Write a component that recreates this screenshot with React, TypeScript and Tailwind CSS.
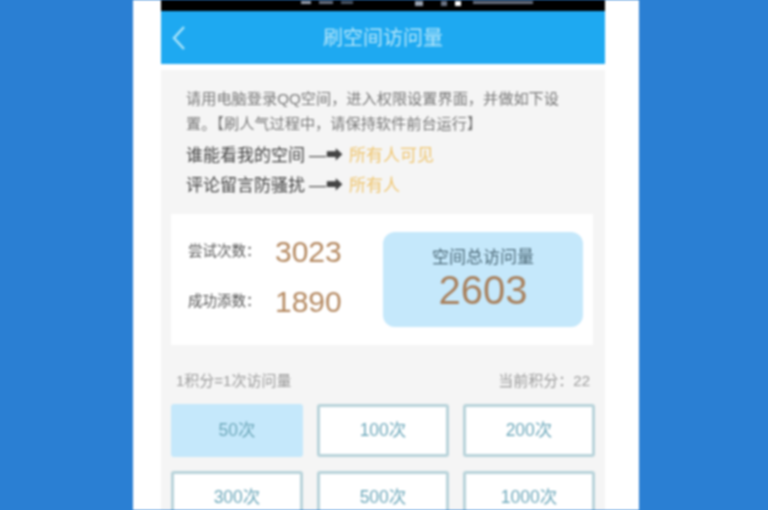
const cjk = '"Liberation Sans", "Noto Sans CJK SC", sans-serif';

const options = ['50次', '100次', '200次', '300次', '500次', '1000次'];

function Stat({ label, value }: { label: string; value: string }) {
  return (
    <div className="flex items-center h-[50px]">
      <span className="text-[14.5px] text-[#555] w-[87px]">{label}</span>
      <span className="text-[30px] text-[#b58a62]">{value}</span>
    </div>
  );
}

export default function App() {
  return (
    <div className="h-[510px] w-[768px] overflow-hidden bg-[#2a7fd3]" style={{ fontFamily: cjk }}>
      <div className="ml-[133px] w-[506px] h-[510px] bg-white pl-[28px] pr-[34px] blur-[1px]">
        <div className="h-[11px] bg-black flex items-start pt-[1px] pl-[140px] overflow-hidden">
          <span className="w-[10px] h-[3px] bg-gray-400"></span>
          <span className="ml-[8px] w-[14px] h-[3px] bg-gray-500"></span>
          <span className="ml-[8px] w-[12px] h-[3px] bg-gray-600"></span>
          <span className="ml-[62px] w-[8px] h-[5px] bg-gray-400"></span>
          <span className="ml-[18px] w-[6px] h-[5px] bg-gray-500"></span>
          <span className="ml-[8px] w-[6px] h-[5px] bg-white"></span>
          <span className="ml-[12px] w-[60px] h-[3px] bg-gray-500"></span>
        </div>
        <div className="relative h-[53px] bg-[#1ea9f1] flex items-center justify-center">
          <svg className="absolute left-[10px] top-[14px]" width="16" height="26" viewBox="0 0 16 26" fill="none">
            <path d="M13 2 L3 13 L13 24" stroke="#a6e3fa" strokeWidth="2.5" />
          </svg>
          <span className="text-[20px] text-[#b5e6fa]">刷空间访问量</span>
        </div>
        <div className="mt-[6px] h-[440px] bg-[#f5f5f5] overflow-hidden">
          <div className="pl-[25px] pr-[35px] pt-[16px]">
            <p className="text-[15.2px] leading-[25px] text-[#777]">
              请用电脑登录QQ空间&#xFF0C;进入权限设置界面&#xFF0C;并做如下设置。【刷人气过程中&#xFF0C;请保持软件前台运行】
            </p>
            <div className="mt-[5px] flex items-center h-[30px] text-[17px] text-[#444]">
              <span>谁能看我的空间</span>
              <span className="ml-[4px] text-[#444]">—➡</span>
              <span className="ml-[6px] text-[#efc56e]">所有人可见</span>
            </div>
            <div className="flex items-center h-[30px] text-[17px] text-[#444]">
              <span>评论留言防骚扰</span>
              <span className="ml-[4px] text-[#444]">—➡</span>
              <span className="ml-[6px] text-[#efc56e]">所有人</span>
            </div>
          </div>
          <div className="mt-[13px] ml-[10px] mr-[12px] h-[131px] bg-white flex items-center justify-between pl-[17px] pr-[10px]">
            <div className="-mt-[6px]">
              <Stat label="尝试次数&#xFF1A;" value="3023" />
              <Stat label="成功添数&#xFF1A;" value="1890" />
            </div>
            <div className="w-[200px] h-[95px] rounded-[12px] bg-[#c5e8fb] flex flex-col items-center pt-[15px]">
              <span className="text-[17px] leading-[22px] text-[#4d6a78]">空间总访问量</span>
              <span className="text-[40px] leading-[42px] text-[#a9825f]">2603</span>
            </div>
          </div>
          <div className="mt-[25px] mx-[15px] flex justify-between text-[15px] text-[#999]">
            <span>1积分=1次访问量</span>
            <span>当前积分&#xFF1A;22</span>
          </div>
          <div className="mt-[11px] mx-[10px] grid grid-cols-3 gap-x-[14px] gap-y-[14px]">
            {options.map((o, i) => (
              <div
                key={o}
                className={`h-[53px] pt-[1px] flex items-center justify-center text-[17.5px] text-[#6fa9bb] rounded-[3px] border-[3px] ${
                  i === 0 ? 'bg-[#c5e8fb] border-[#c5e8fb]' : 'bg-white border-[#b8d3da]'
                }`}
              >
                {o}
              </div>
            ))}
          </div>
        </div>
      </div>
    </div>
  );
}
